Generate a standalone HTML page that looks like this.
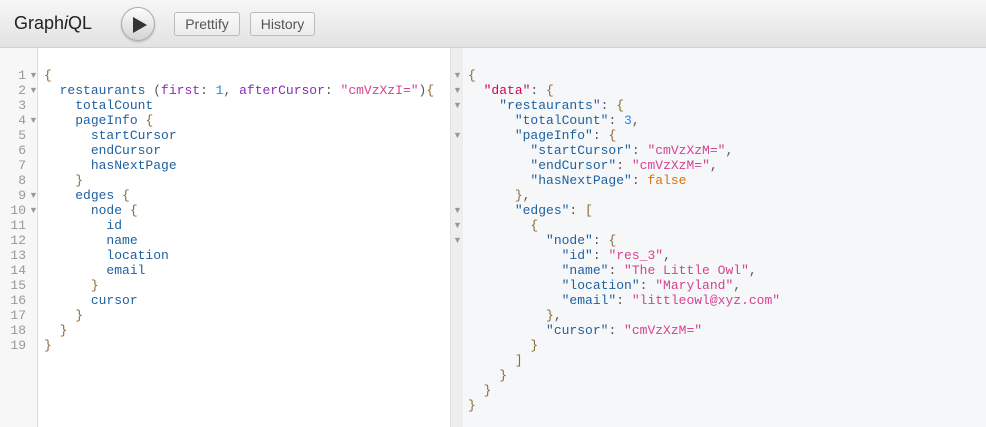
<!DOCTYPE html>
<html><head><style>
*{margin:0;padding:0;box-sizing:border-box}
body{width:986px;height:427px;overflow:hidden;background:#fff;font-family:"Liberation Sans",sans-serif;position:relative}
.top{position:absolute;left:0;top:0;width:986px;height:48px;background:linear-gradient(#f7f7f7,#e2e2e2);border-bottom:1px solid #d0d0d0}
.title{position:absolute;left:14px;top:13px;font-size:18px;color:#222}
.run{position:absolute;left:121px;top:7px;width:34px;height:34px;border-radius:50%;border:1px solid #aaa;background:linear-gradient(#fdfdfd,#d2d3d6);box-shadow:0 1px 2px rgba(0,0,0,.2)}
.run svg{position:absolute;left:11px;top:9px}
.btn{position:absolute;top:12px;height:24px;border:1px solid #bbb;border-radius:3px;background:linear-gradient(#f9f9f9,#ececec);font-size:14px;color:#555;line-height:22px;text-align:center}
.gut{position:absolute;left:0;top:48px;width:38px;height:379px;background:#f7f7f7;border-right:1px solid #ddd}
.div{position:absolute;left:450px;top:48px;width:13px;height:379px;background:#eeeeee;border-left:1px solid #e0e0e0}
.res{position:absolute;left:463px;top:48px;width:523px;height:379px;background:#f6f7f8}
pre{position:absolute;font-family:"Liberation Mono",monospace;font-size:13px;line-height:15px;color:#555;white-space:pre}
.ln{color:#999;text-align:right}
.ar{position:absolute;color:#999;font-size:9px;line-height:15px;height:15px}
.p{color:#1f61a0}.a{color:#8b2bb9}.n{color:#2882f9}.s{color:#d64292}.d{color:#d2054e}.b{color:#d47509}.k{color:#8a6a3a}
</style></head><body>
<div class="top">
<div class="title">Graph<i>i</i>QL</div>
<div class="run"><svg width="14" height="16" viewBox="0 0 14 16"><path d="M0 0L14 8L0 16Z" fill="#333"/></svg></div>
<div class="btn" style="left:174px;width:66px">Prettify</div>
<div class="btn" style="left:250px;width:65px">History</div>
</div>
<div class="gut"></div>
<pre class="ln" style="left:4px;top:68px;width:22px">1
2
3
4
5
6
7
8
9
10
11
12
13
14
15
16
17
18
19</pre>
<span class="ar" style="left:29px;top:68px">▼</span>
<span class="ar" style="left:29px;top:83px">▼</span>
<span class="ar" style="left:29px;top:113px">▼</span>
<span class="ar" style="left:29px;top:188px">▼</span>
<span class="ar" style="left:29px;top:203px">▼</span>
<pre style="left:44px;top:68px"><span class="k">{</span>
  <span class="p">restaurants</span> (<span class="a">first</span>: <span class="n">1</span>, <span class="a">afterCursor</span>: <span class="s">"cmVzXzI="</span>)<span class="k">{</span>
    <span class="p">totalCount</span>
    <span class="p">pageInfo</span> <span class="k">{</span>
      <span class="p">startCursor</span>
      <span class="p">endCursor</span>
      <span class="p">hasNextPage</span>
    <span class="k">}</span>
    <span class="p">edges</span> <span class="k">{</span>
      <span class="p">node</span> <span class="k">{</span>
        <span class="p">id</span>
        <span class="p">name</span>
        <span class="p">location</span>
        <span class="p">email</span>
      <span class="k">}</span>
      <span class="p">cursor</span>
    <span class="k">}</span>
  <span class="k">}</span>
<span class="k">}</span></pre>
<div class="div"></div>
<div class="res"></div>
<span class="ar" style="left:453px;top:68px">▼</span>
<span class="ar" style="left:453px;top:83px">▼</span>
<span class="ar" style="left:453px;top:98px">▼</span>
<span class="ar" style="left:453px;top:128px">▼</span>
<span class="ar" style="left:453px;top:203px">▼</span>
<span class="ar" style="left:453px;top:218px">▼</span>
<span class="ar" style="left:453px;top:233px">▼</span>
<pre style="left:468px;top:68px"><span class="k">{</span>
  <span class="d">"data"</span>: <span class="k">{</span>
    <span class="p">"restaurants"</span>: <span class="k">{</span>
      <span class="p">"totalCount"</span>: <span class="n">3</span>,
      <span class="p">"pageInfo"</span>: <span class="k">{</span>
        <span class="p">"startCursor"</span>: <span class="s">"cmVzXzM="</span>,
        <span class="p">"endCursor"</span>: <span class="s">"cmVzXzM="</span>,
        <span class="p">"hasNextPage"</span>: <span class="b">false</span>
      <span class="k">}</span>,
      <span class="p">"edges"</span>: <span class="k">[</span>
        <span class="k">{</span>
          <span class="p">"node"</span>: <span class="k">{</span>
            <span class="p">"id"</span>: <span class="s">"res_3"</span>,
            <span class="p">"name"</span>: <span class="s">"The Little Owl"</span>,
            <span class="p">"location"</span>: <span class="s">"Maryland"</span>,
            <span class="p">"email"</span>: <span class="s">"littleowl@xyz.com"</span>
          <span class="k">}</span>,
          <span class="p">"cursor"</span>: <span class="s">"cmVzXzM="</span>
        <span class="k">}</span>
      <span class="k">]</span>
    <span class="k">}</span>
  <span class="k">}</span>
<span class="k">}</span></pre>
</body></html>
